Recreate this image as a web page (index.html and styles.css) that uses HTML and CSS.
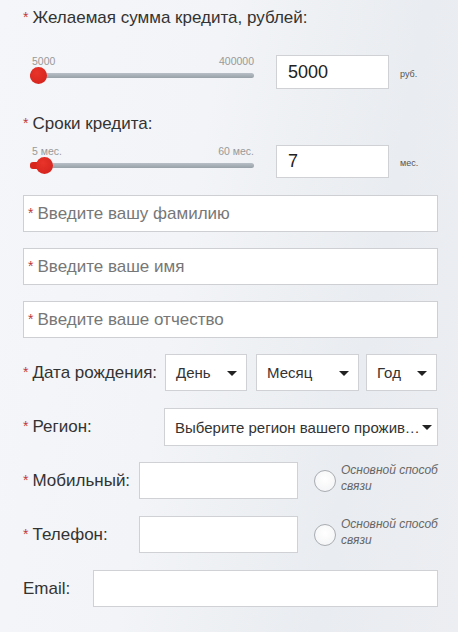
FILE: index.html
```html
<!DOCTYPE html>
<html lang="ru">
<head>
<meta charset="utf-8">
<link rel="stylesheet" href="styles.css">
</head>
<body>
<div class="form">
  <div class="title"><span class="req">*</span>Желаемая сумма кредита, рублей:</div>
  <div class="slider-row">
    <div class="slider">
      <div class="ticks"><span>5000</span><span>400000</span></div>
      <div class="track"><div class="fill"></div><div class="thumb"></div></div>
    </div>
    <div class="num">5000</div>
    <div class="unit">руб.</div>
  </div>

  <div class="title title2"><span class="req">*</span>Сроки кредита:</div>
  <div class="slider-row row2">
    <div class="slider">
      <div class="ticks"><span>5 мес.</span><span>60 мес.</span></div>
      <div class="track"><div class="fill fill2"></div><div class="thumb thumb2"></div></div>
    </div>
    <div class="num">7</div>
    <div class="unit">мес.</div>
  </div>

  <div class="field first"><span class="req">*</span>Введите вашу фамилию</div>
  <div class="field"><span class="req">*</span>Введите ваше имя</div>
  <div class="field"><span class="req">*</span>Введите ваше отчество</div>

  <div class="row date-row">
    <div class="label"><span class="req">*</span>Дата рождения:</div>
    <div class="select s-day">День<span class="caret"></span></div>
    <div class="select s-month">Месяц<span class="caret"></span></div>
    <div class="select s-year">Год<span class="caret"></span></div>
  </div>

  <div class="row region-row">
    <div class="label"><span class="req">*</span>Регион:</div>
    <div class="select s-region"><span class="ell">Выберите регион вашего проживания</span><span class="caret"></span></div>
  </div>

  <div class="row phone-row">
    <div class="label"><span class="req">*</span>Мобильный:</div>
    <div class="box phone"></div>
    <div class="radio"></div>
    <div class="hint">Основной способ<br>связи</div>
  </div>

  <div class="row phone-row">
    <div class="label"><span class="req">*</span>Телефон:</div>
    <div class="box phone"></div>
    <div class="radio"></div>
    <div class="hint">Основной способ<br>связи</div>
  </div>

  <div class="row email-row">
    <div class="label">Email:</div>
    <div class="box email"></div>
  </div>
</div>
</body>
</html>
```

FILE: styles.css
```css
html, body {
  margin: 0;
  padding: 0;
}
body {
  width: 458px;
  height: 632px;
  overflow: hidden;
  font-family: "Liberation Sans", Arial, sans-serif;
  color: #333;
  background: linear-gradient(100deg, #f4f6f9 0%, #f2f4f7 40%, #e9ecf0 75%, #eceef2 100%);
}
.form {
  padding: 8px 20px 0 23px;
}
.req {
  color: #c0393b;
  font-size: 14px;
  margin-right: 4px;
  position: relative;
  top: -1px;
}
.title {
  font-size: 17px;
  line-height: 20px;
  height: 20px;
}
.title2 {
  margin-top: 25px;
}
.slider-row {
  display: flex;
  margin-top: 27px;
  height: 34px;
}
.row2 {
  margin-top: 11px;
  height: 33px;
}
.slider {
  width: 224px;
  margin-left: 7px;
}
.ticks {
  display: flex;
  justify-content: space-between;
  font-size: 10.5px;
  line-height: 12px;
  color: #999;
  margin-left: 2px;
}
.track {
  position: relative;
  height: 5px;
  margin-top: 6px;
  border-radius: 3px;
  background: linear-gradient(#b8bfc6, #98a0a8);
}
.fill {
  position: absolute;
  left: 0;
  top: 0;
  height: 5px;
  width: 8px;
  border-radius: 3px;
  background: #d9261c;
}
.fill2 {
  width: 14px;
  height: 7px;
  top: -1px;
}
.thumb {
  position: absolute;
  left: 0;
  top: -6px;
  width: 17px;
  height: 17px;
  border-radius: 50%;
  background: radial-gradient(circle at 40% 35%, #e8342a, #d2201a);
}
.thumb2 {
  left: 6px;
}
.num {
  margin-left: 22px;
  width: 113px;
  height: 100%;
  box-sizing: border-box;
  background: #fff;
  border: 1px solid #cfd1d4;
  font-size: 18px;
  line-height: 32px;
  padding-left: 11px;
  color: #222;
}
.row2 .num {
  line-height: 31px;
}
.unit {
  margin-left: 11px;
  font-size: 9px;
  color: #555;
  align-self: center;
  padding-top: 3px;
}
.field {
  box-sizing: border-box;
  height: 37px;
  width: 415px;
  margin-top: 16px;
  background: #fff;
  border: 1px solid #cdcfd2;
  font-size: 17px;
  line-height: 35px;
  padding-left: 4px;
  color: #777;
}
.field.first {
  margin-top: 17px;
}
.row {
  display: flex;
  align-items: center;
  margin-top: 16px;
  height: 37px;
}
.region-row {
  margin-top: 17px;
  height: 38px;
}
.label {
  font-size: 17px;
  white-space: nowrap;
}
.select {
  box-sizing: border-box;
  height: 100%;
  background: #fff;
  border: 1px solid #cfd1d4;
  display: flex;
  align-items: center;
  justify-content: space-between;
  font-size: 15px;
  color: #333;
  padding: 0 9px 0 10px;
}
.date-row .label {
  width: 142px;
}
.s-day {
  width: 82px;
}
.s-month {
  margin-left: 9px;
  width: 103px;
}
.s-year {
  margin-left: 7px;
  width: 71px;
}
.region-row .label {
  width: 141px;
}
.s-region {
  width: 274px;
  padding-right: 5px;
}
.ell {
  flex: 1;
  overflow: hidden;
  white-space: nowrap;
  text-overflow: ellipsis;
}
.caret {
  width: 0;
  height: 0;
  border-left: 5px solid transparent;
  border-right: 5px solid transparent;
  border-top: 5px solid #222;
  flex: none;
  margin-top: 1px;
}
.box {
  box-sizing: border-box;
  height: 100%;
  background: #fff;
  border: 1px solid #cfd1d4;
}
.phone-row + .phone-row {
  margin-top: 17px;
}
.phone-row .label {
  width: 116px;
}
.phone {
  width: 159px;
}
.radio {
  box-sizing: border-box;
  width: 22px;
  height: 22px;
  border-radius: 50%;
  border: 1px solid #a9acb0;
  background: radial-gradient(circle at 50% 40%, #ffffff, #f1f2f4);
  margin-left: 16px;
}
.hint {
  margin-left: 5px;
  font-size: 12px;
  line-height: 16px;
  font-style: italic;
  color: #666;
  margin-top: -5px;
}
.email-row {
  margin-top: 17px;
}
.email-row .label {
  width: 70px;
}
.email {
  width: 345px;
}
```
